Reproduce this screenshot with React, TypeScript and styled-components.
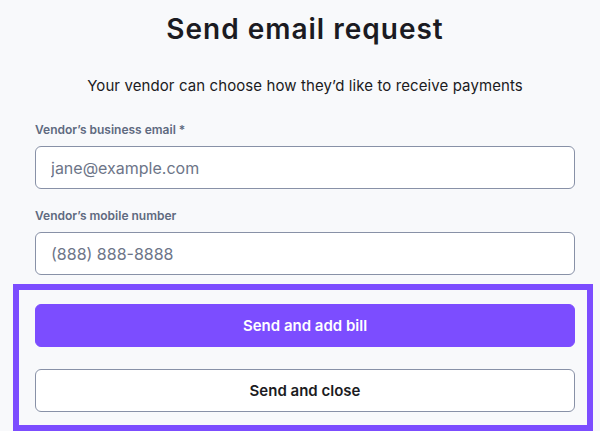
import React from "react";
import styled, { createGlobalStyle } from "styled-components";

const GlobalStyle = createGlobalStyle`
  html, body {
    margin: 0;
    padding: 0;
    background: #f8f9fb;
  }
  body {
    font-family: Inter, "Liberation Sans", sans-serif;
    color: #1b1b22;
  }
  * { box-sizing: border-box; }
`;

const Page = styled.div`
  width: 600px;
  height: 431px;
  overflow: hidden;
  padding: 11px 25px 0 35px;
`;

const Title = styled.h1`
  margin: 0;
  text-align: center;
  font-size: 28px;
  line-height: 36px;
  font-weight: 600;
  letter-spacing: 1px;
  color: #1b1b22;
`;

const Subtitle = styled.p`
  margin: 29px 0 0;
  text-align: center;
  font-size: 15px;
  line-height: 20px;
  font-weight: 400;
  letter-spacing: 0.1px;
  color: #1b1b22;
`;

const Form = styled.div`
  display: flex;
  flex-direction: column;
  gap: 19px;
  margin-top: 26px;
`;

const Field = styled.div`
  display: flex;
  flex-direction: column;
  gap: 8px;
`;

const Label = styled.label`
  font-size: 12px;
  line-height: 16px;
  font-weight: 600;
  color: #5f6a80;
`;

const Input = styled.input`
  height: 43px;
  width: 100%;
  border: 1px solid #8891a7;
  border-radius: 6px;
  background: #ffffff;
  padding: 0 15px;
  font-family: inherit;
  font-size: 16px;
  color: #1b1b22;
  outline: none;
  &::placeholder {
    color: #6d7588;
  }
`;

const ActionFrame = styled.div`
  margin: 9px -18px 0 -22px;
  border: 6px solid #7c4dff;
  padding: 14px 12px 13px 16px;
  display: flex;
  flex-direction: column;
  gap: 22px;
`;

const Button = styled.button<{ $primary?: boolean }>`
  height: 43px;
  width: 100%;
  border-radius: 6px;
  font-family: inherit;
  font-size: 15px;
  font-weight: 600;
  cursor: pointer;
  border: 1px solid ${(p) => (p.$primary ? "#7c4dff" : "#8891a7")};
  background: ${(p) => (p.$primary ? "#7c4dff" : "#ffffff")};
  color: ${(p) => (p.$primary ? "#ffffff" : "#1b1b22")};
`;

export default function App() {
  return (
    <>
      <GlobalStyle />
      <Page>
        <Title>Send email request</Title>
        <Subtitle>Your vendor can choose how they’d like to receive payments</Subtitle>
        <Form>
          <Field>
            <Label>Vendor’s business email *</Label>
            <Input type="email" placeholder="jane@example.com" />
          </Field>
          <Field>
            <Label>Vendor’s mobile number</Label>
            <Input type="tel" placeholder="(888) 888-8888" />
          </Field>
        </Form>
        <ActionFrame>
          <Button $primary>Send and add bill</Button>
          <Button>Send and close</Button>
        </ActionFrame>
      </Page>
    </>
  );
}
